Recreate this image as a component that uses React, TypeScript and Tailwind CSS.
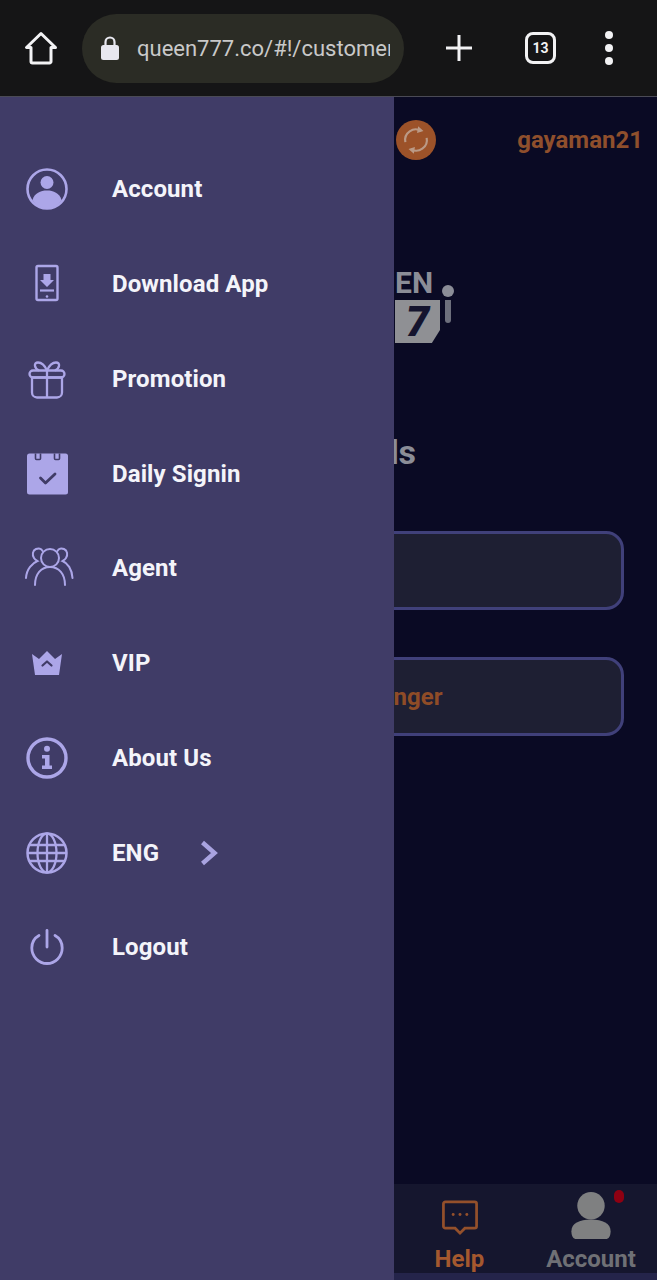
import React from "react";

const Ico = ({ children, w = 48, h = 48 }: { children: React.ReactNode; w?: number; h?: number }) => (
  <svg width={w} height={h} viewBox="0 0 48 48" fill="none" className="overflow-visible">{children}</svg>
);
const C = "#aca6e8";
const D = "#403c67";

const AccountIcon = () => (
  <Ico>
    <circle cx="24" cy="24" r="19.5" stroke={C} strokeWidth="2.6" />
    <circle cx="24" cy="17.5" r="6.5" fill={C} />
    <path d="M9.5 35c2-7 8-9.5 14.5-9.5S36.500 28 38.500 35C35 40.500 29.500 43.500 24 43.500S13 40.500 9.500 35Z" fill={C} />
  </Ico>
);
const DownloadIcon = () => (
  <Ico>
    <rect x="13.5" y="6" width="21" height="34" rx="1.5" stroke={C} strokeWidth="2.4" />
    <path d="M20.5 14h7v6h3.5l-7 7-7-7h3.5z" fill={C} />
    <path d="M17 30.5h14" stroke={C} strokeWidth="2.2" />
    <circle cx="24" cy="36.5" r="1.3" fill={C} />
  </Ico>
);
const GiftIcon = () => (
  <Ico>
    <path d="M9 22.5h30v15a5 5 0 0 1-5 5H14a5 5 0 0 1-5-5z" stroke={C} strokeWidth="2.3" />
    <rect x="6.5" y="15.5" width="35" height="7" rx="3.5" stroke={C} strokeWidth="2.3" />
    <path d="M24 15.500v27M24 15.500c-2-4.500-5-8-9-8-4.500 0-4 5.500 1 8M24 15.500c2-4.500 5-8 9-8 4.500 0 4 5.500-1 8" stroke={C} strokeWidth="2.3" />
  </Ico>
);
const CalendarIcon = () => (
  <Ico>
    <rect x="4" y="3.5" width="41" height="41" rx="2.5" fill={C} />
    <path d="M12.500 3.500v5a1 1 0 0 0 1 1h3a1 1 0 0 0 1-1v-5M31.500 3.500v5a1 1 0 0 0 1 1h3a1 1 0 0 0 1-1v-5" stroke={D} strokeWidth="1.6" />
    <path d="M17.500 28l5 5L32 24" stroke={D} strokeWidth="2.8" strokeLinecap="round" strokeLinejoin="round" />
  </Ico>
);
const AgentIcon = () => (
  <Ico>
    <g transform="translate(3 0)">
      <circle cx="24" cy="14" r="9" stroke={C} strokeWidth="2" />
      <path d="M9 41c0-11 6-18 15-18s15 7 15 18" stroke={C} strokeWidth="2" strokeLinecap="round" />
      <path d="M16.500 7c-1-2.500-4-3-6.500-2-3.500 1.500-4 6-2 9 1 1.500 2 2 3.500 3-5 2-11 8-11.500 17" stroke={C} strokeWidth="2" strokeLinecap="round" />
      <path d="M31.500 7c1-2.500 4-3 6.500-2 3.500 1.500 4 6 2 9-1 1.500-2 2-3.500 3 5 2 9.500 8 10 17" stroke={C} strokeWidth="2" strokeLinecap="round" />
    </g>
  </Ico>
);
const CrownIcon = () => (
  <Ico>
    <path d="M9 15l7 5 8-8 8 8 7-5-3 21H12z" fill={C} />
    <path d="M19.500 26.500L24 22.500l4.500 4" stroke={D} strokeWidth="2.2" strokeLinecap="round" strokeLinejoin="round" />
  </Ico>
);
const InfoIcon = () => (
  <Ico>
    <circle cx="24" cy="24" r="19" stroke={C} strokeWidth="3.4" />
    <circle cx="24" cy="14.800" r="3" fill={C} />
    <path d="M19 21h7.500v10.500H29V35H19v-3.500h3V24.500h-3z" fill={C} />
  </Ico>
);
const GlobeIcon = () => (
  <Ico>
    <circle cx="24" cy="24" r="19.500" stroke={C} strokeWidth="2.5" />
    <ellipse cx="24" cy="24" rx="9.500" ry="19.500" stroke={C} strokeWidth="2.3" />
    <path d="M24 4.500v39M6.500 16h35M4.500 24h39M6.500 32h35" stroke={C} strokeWidth="2.3" />
  </Ico>
);
const PowerIcon = () => (
  <Ico>
    <path d="M24 7.500V24" stroke={C} strokeWidth="2.8" strokeLinecap="round" />
    <path d="M16 12.500C11.500 15 8.800 19.800 8.800 25c0 8.500 6.800 15.500 15.200 15.500S39.200 33.500 39.200 25c0-5.200-2.700-10-7.200-12.500" stroke={C} strokeWidth="2.8" strokeLinecap="round" />
  </Ico>
);

const rows: { label: string; icon: React.ReactNode; chevron?: boolean }[] = [
  { label: "Account", icon: <AccountIcon /> },
  { label: "Download App", icon: <DownloadIcon /> },
  { label: "Promotion", icon: <GiftIcon /> },
  { label: "Daily Signin", icon: <CalendarIcon /> },
  { label: "Agent", icon: <AgentIcon /> },
  { label: "VIP", icon: <CrownIcon /> },
  { label: "About Us", icon: <InfoIcon /> },
  { label: "ENG", icon: <GlobeIcon />, chevron: true },
  { label: "Logout", icon: <PowerIcon /> },
];

function BrowserBar() {
  return (
    <header className="h-[96px] shrink-0 bg-[#151516] flex items-center font-['Roboto',sans-serif]">
      <div className="w-[82px] flex justify-center">
        <svg width="36" height="36" viewBox="0 0 36 36" fill="none">
          <path d="M18 3.500 3.500 17.500h4.500v14a1.500 1.500 0 0 0 1.500 1.500h17a1.500 1.500 0 0 0 1.500-1.500v-14h4.500z" stroke="#f2f2f4" strokeWidth="3" strokeLinejoin="round" />
        </svg>
      </div>
      <div className="w-[322px] h-[69px] rounded-[35px] bg-[#2b2c25] flex items-center pl-[18px] pr-[14px] gap-[17px]">
        <svg width="20" height="26" viewBox="0 0 20 26" className="shrink-0">
          <path d="M5.500 10V7a4.500 4.500 0 0 1 9 0v3" fill="none" stroke="#e8e8f0" strokeWidth="2.2" />
          <rect x="1" y="10" width="18" height="15" rx="2.500" fill="#e8e8f0" />
        </svg>
        <div className="overflow-hidden whitespace-nowrap text-[22px] text-[#c9c9c9]">queen777.co/#!/customer</div>
      </div>
      <div className="flex-1 flex items-center">
        <div className="w-[109px] flex justify-center">
          <svg width="28" height="28" viewBox="0 0 28 28"><path d="M14 1v26M1 14h26" stroke="#f2f2f4" strokeWidth="3" /></svg>
        </div>
        <div className="w-[31px] h-[32px] rounded-[8px] border-[3px] border-[#f2f2f4] flex items-center justify-center text-[14px] font-bold text-[#f2f2f4] ml-[12px]">13</div>
        <div className="ml-[49px] flex flex-col gap-[5px]">
          <span className="w-[8px] h-[8px] rounded-full bg-[#f2f2f4]" />
          <span className="w-[8px] h-[8px] rounded-full bg-[#f2f2f4]" />
          <span className="w-[8px] h-[8px] rounded-full bg-[#f2f2f4]" />
        </div>
      </div>
    </header>
  );
}

function Drawer() {
  return (
    <aside className="w-[394px] shrink-0 bg-[#403c67] pt-[45px] font-['Roboto',sans-serif]">
      {rows.map((r) => (
        <div key={r.label} className="h-[94.75px] flex items-center pl-[23px]">
          <span className="w-[48px] h-[48px] shrink-0">{r.icon}</span>
          <span className="ml-[41px] text-[24px] font-bold tracking-[0.1px] text-[#f4f4fa]">{r.label}</span>
          {r.chevron && (
            <svg width="18" height="26" viewBox="0 0 18 26" fill="none" className="ml-[41px]">
              <path d="M2.500 2.500 14.500 13 2.500 23.500" stroke="#a9a3e0" strokeWidth="4.5" />
            </svg>
          )}
        </div>
      ))}
    </aside>
  );
}

function Backdrop() {
  return (
    <main className="flex-1 min-w-0 bg-[#0a0a24] overflow-hidden flex flex-col font-['Roboto',sans-serif]">
      <div className="h-[85px] shrink-0 flex items-center justify-between pl-[2px] pr-[14px]">
        <span className="w-[40px] h-[40px] rounded-full bg-[#9c5229] flex items-center justify-center">
          <svg width="32" height="32" viewBox="0 0 30 30" fill="none" stroke="#bb9a86" strokeWidth="2">
            <path d="M5 17a10 10 0 0 1 15-10.500M25 13a10 10 0 0 1-15 10.500" />
            <path d="M17 2l5 4.500-6 2z M13 28l-5-4.500 6-2z" fill="#bb9a86" stroke="none" />
          </svg>
        </span>
        <span className="text-[24px] font-bold text-[#8f4f2c]">gayaman21</span>
      </div>
      <div className="h-[90px] mt-[88px] shrink-0 relative">
        <span className="absolute left-[1px] top-[-2px] text-[30px] leading-[30px] font-bold text-[#8b8d97]">EN</span>
        <span className="absolute left-[48px] top-[15px] w-[12px] h-[12px] rounded-full bg-[#8b8d97]" />
        <span className="absolute left-[1px] top-[30px] w-[45px] h-[43px] bg-[#8f9094] [clip-path:polygon(0_0,100%_0,100%_70%,82%_100%,0_100%)] flex items-center justify-center text-[42px] leading-none font-black italic text-[#14142e]">7</span>
        <span className="absolute left-[51px] top-[30px] w-[6px] h-[23px] bg-[#6d6f7c] rounded-b-[4px]" />
      </div>
      <div className="mt-[71px] h-[42px] shrink-0 text-[34px] leading-[42px] font-bold text-[#8b8d97] overflow-hidden whitespace-nowrap ml-[-110px]">Rewards</div>
      <div className="mt-[58px] h-[79px] w-[330px] shrink-0 ml-[-100px] rounded-[18px] border-[3px] border-[#40407a] bg-[#1e1f33]" />
      <div className="mt-[47px] h-[79px] w-[330px] shrink-0 ml-[-100px] rounded-[18px] border-[3px] border-[#40407a] bg-[#1e1f33] flex items-center pl-[25px] text-[24px] font-bold text-[#8f4c27]">Messenger</div>
      <div className="flex-1" />
      <nav className="h-[96px] shrink-0 bg-[#15162e] border-b-[7px] border-[#24244a] flex">
        <div className="w-[131px] flex flex-col items-center">
          <svg width="40" height="40" viewBox="0 0 40 40" fill="none" className="mt-[14px] mb-[8px]">
            <path d="M5 4h30a2 2 0 0 1 2 2v23a2 2 0 0 1-2 2H25l-5 5-5-5H5a2 2 0 0 1-2-2V6a2 2 0 0 1 2-2z" stroke="#94502b" strokeWidth="2.8" />
            <circle cx="13" cy="17" r="1.500" fill="#94502b" /><circle cx="20" cy="17" r="1.500" fill="#94502b" /><circle cx="27" cy="17" r="1.500" fill="#94502b" />
          </svg>
          <span className="text-[24px] leading-[28px] font-bold text-[#a4582e]">Help</span>
        </div>
        <div className="w-[132px] flex flex-col items-center relative">
          <svg width="42" height="50" viewBox="0 0 42 50" className="mt-[8px] mb-[4px]">
            <circle cx="21" cy="14" r="14" fill="#7f8081" />
            <path d="M1 40c0-8 8-12 20-12s20 4 20 12c0 5-2 8-5 8H6c-3 0-5-3-5-8z" fill="#7f8081" />
          </svg>
          <span className="text-[24px] leading-[28px] font-bold text-[#6f7075]">Account</span>
          <span className="absolute right-[33px] top-[6px] w-[10px] h-[13px] rounded-full bg-[#8e0012]" />
        </div>
      </nav>
    </main>
  );
}

export default function App() {
  return (
    <div className="w-[657px] h-[1280px] overflow-hidden flex flex-col bg-[#0a0a24]">
      <BrowserBar />
      <div className="h-[1px] shrink-0 bg-[#4a4a55]" />
      <div className="flex flex-1 min-h-0">
        <Drawer />
        <Backdrop />
      </div>
    </div>
  );
}
